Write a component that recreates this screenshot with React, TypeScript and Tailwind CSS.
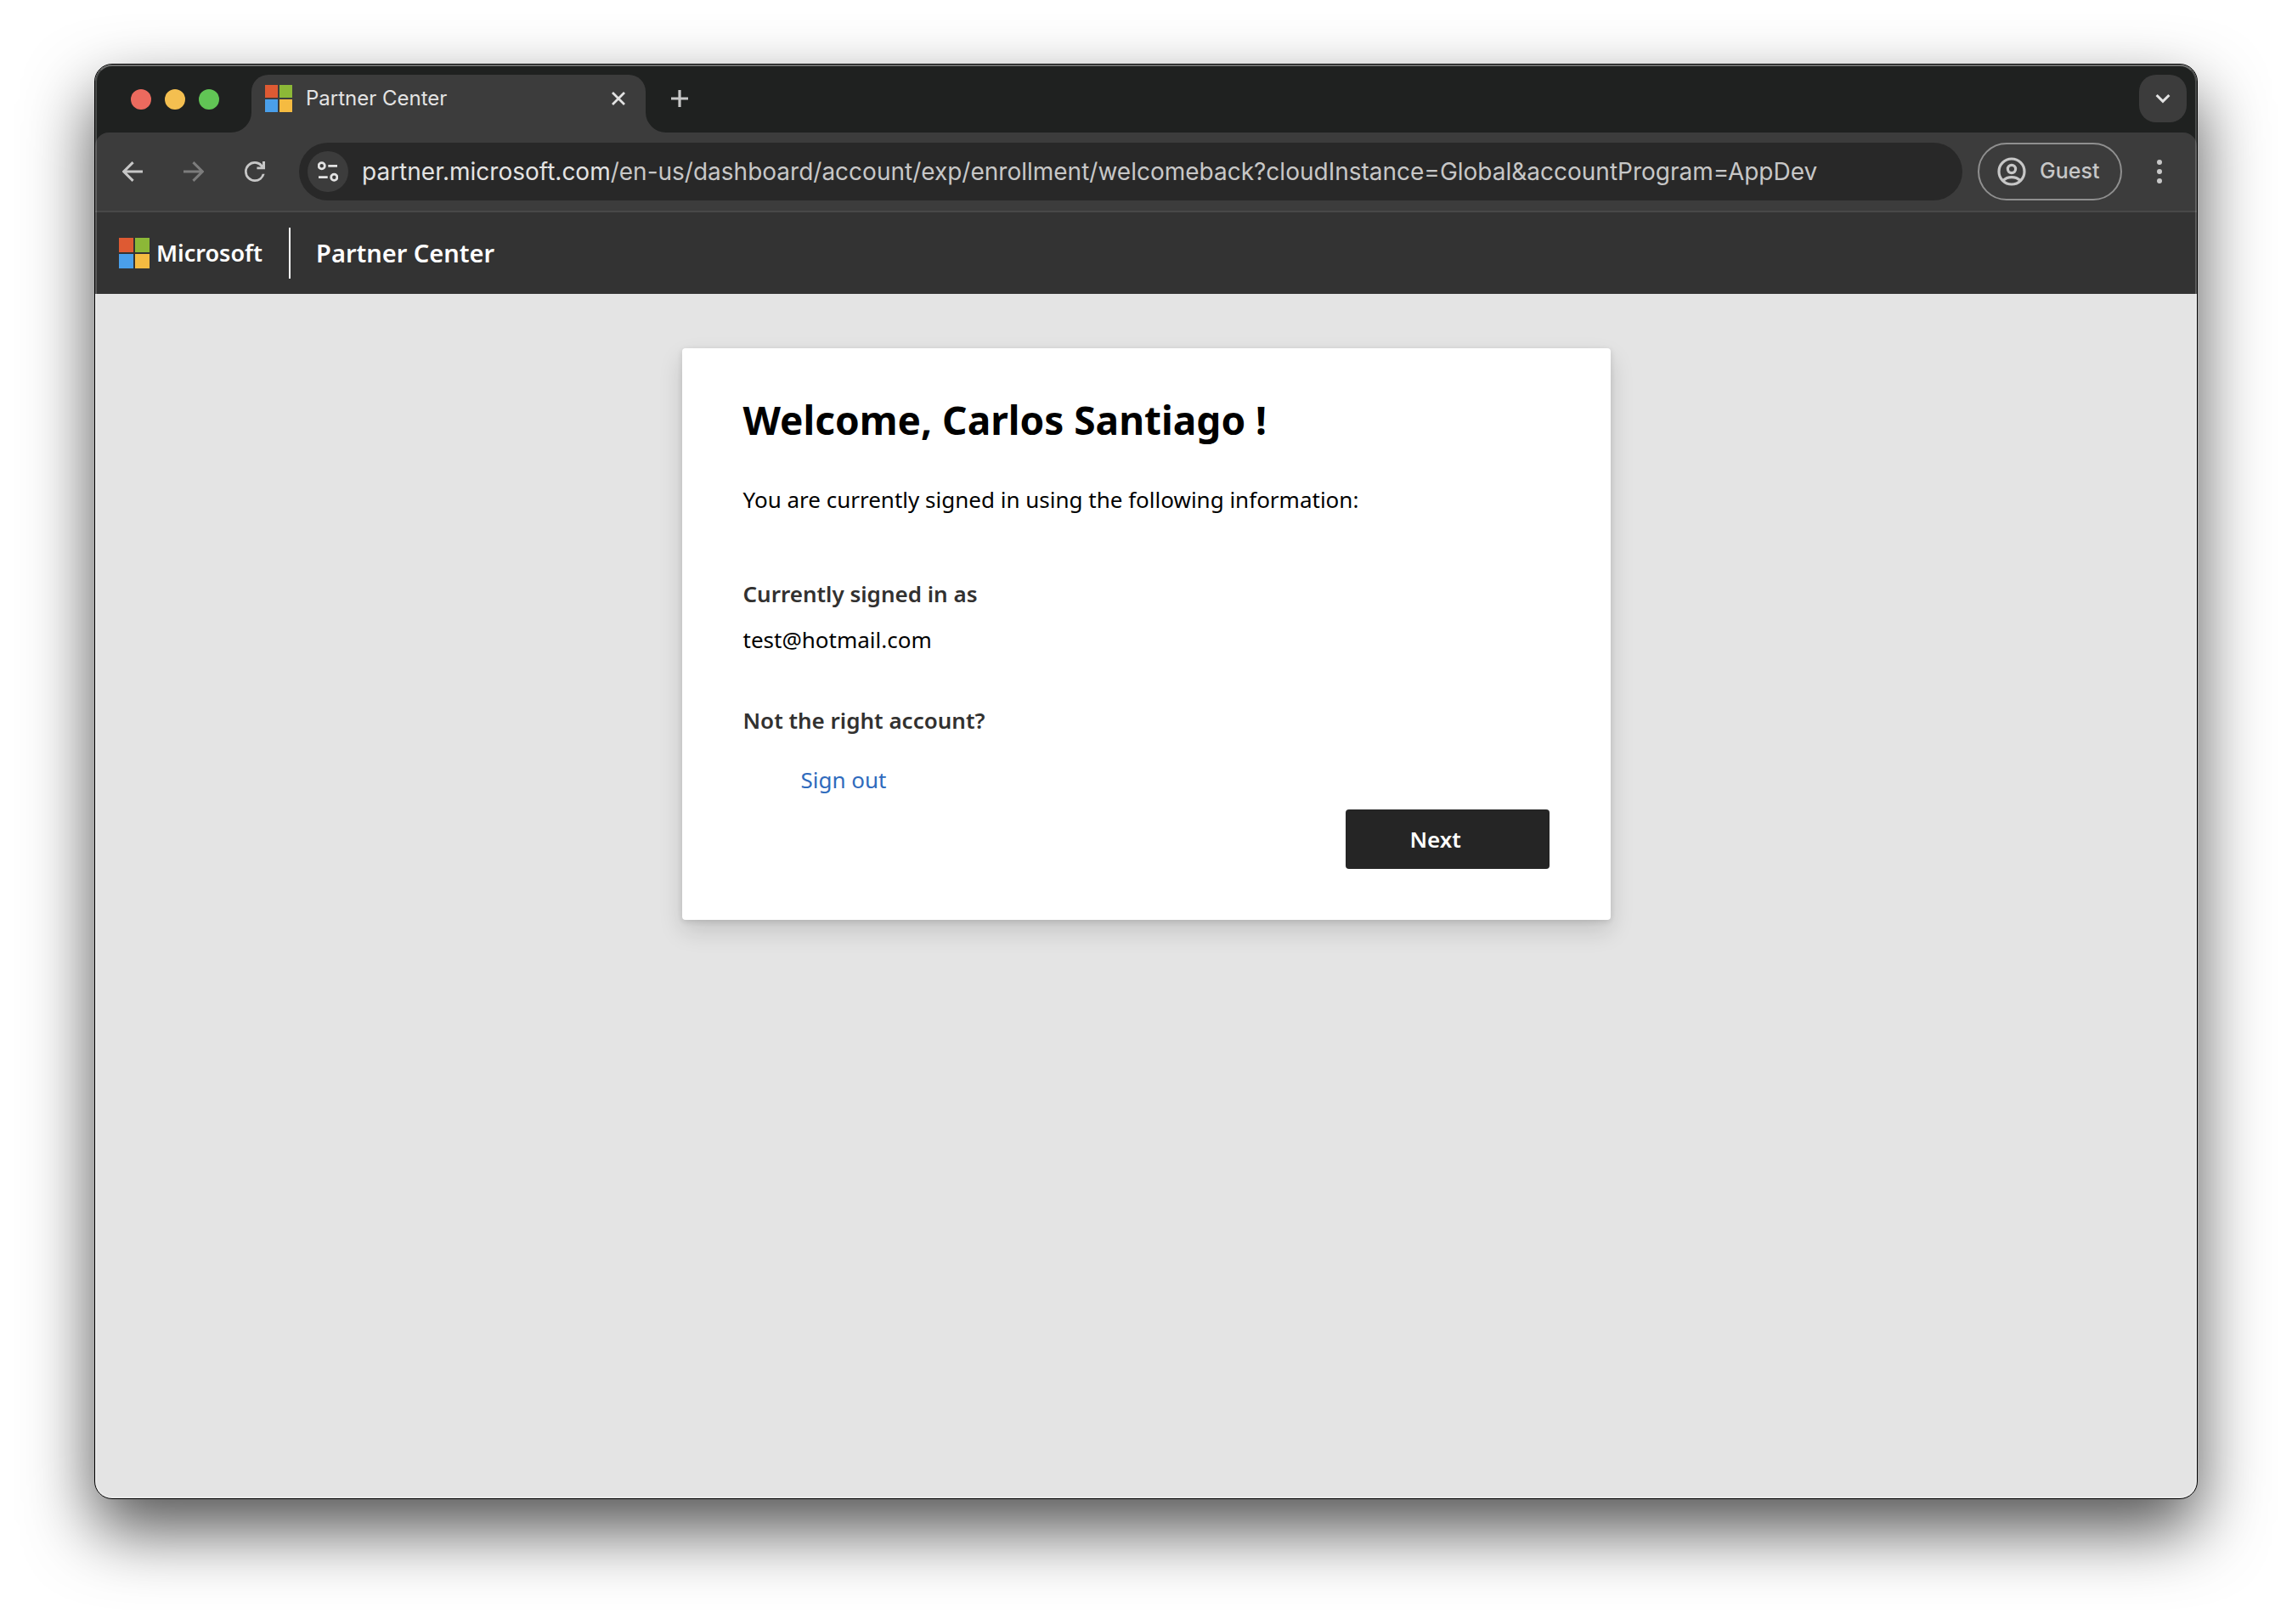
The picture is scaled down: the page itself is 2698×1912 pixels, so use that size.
import React from 'react';

const strokeProps = { fill: 'none', stroke: 'currentColor' } as const;

function MicrosoftLogo({ className }: { className: string }) {
  return (
    <span className={`grid shrink-0 grid-cols-2 gap-0.5 ${className}`} aria-hidden="true">
      <span className="bg-[#de5a33]" />
      <span className="bg-[#8cb837]" />
      <span className="bg-[#4a9fea]" />
      <span className="bg-[#f5bb41]" />
    </span>
  );
}

function ArrowIcon({ flipped = false }: { flipped?: boolean }) {
  return (
    <svg viewBox="0 0 24 24" className="size-6" {...strokeProps} strokeWidth="3" aria-hidden="true">
      {flipped ? (
        <path d="M0 12H22M11.4 1.1L22.3 12L11.4 22.9" />
      ) : (
        <path d="M24 12H2M12.6 1.1L1.7 12L12.6 22.9" />
      )}
    </svg>
  );
}

function ReloadIcon() {
  return (
    <svg viewBox="4 4 16 16" className="size-6" fill="currentColor" aria-hidden="true">
      <path d="M12 20q-3.35 0-5.675-2.325T4 12t2.325-5.675T12 4q1.725 0 3.3.713T18 6.75V4h2v6.2h-6.4V8.4h3.2q-.8-1-2-1.7T12 5.8Q9.5 5.8 7.65 7.65T5.8 12t1.85 4.35T12 18.2q1.925 0 3.575-1.1T17.85 13.9h1.9q-.7 2.75-2.85 4.425T12 20" />
    </svg>
  );
}

function SiteInfoIcon() {
  return (
    <svg viewBox="0 0 24 24" className="size-6" {...strokeProps} strokeWidth="2.8" aria-hidden="true">
      <circle cx="4.7" cy="5.3" r="3.6" />
      <path d="M12.3 5.3H23M1 18.7H11.7" />
      <circle cx="19.3" cy="18.7" r="3.6" />
    </svg>
  );
}

function AccountIcon() {
  return (
    <svg viewBox="-17 -17 34 34" className="size-[34px]" {...strokeProps} strokeWidth="3.2" aria-hidden="true">
      <circle r="15" />
      <circle cy="-3" r="4.6" />
      <path d="M-10 10.4Q-6 6.6 0 6.6T10 10.4" />
    </svg>
  );
}

function TabFlare({ className, d }: { className: string; d: string }) {
  return (
    <svg viewBox="0 0 24 24" className={`absolute bottom-0 size-6 text-[#3c3c3c] ${className}`} fill="currentColor" aria-hidden="true">
      <path d={d} />
    </svg>
  );
}

function TabStrip() {
  return (
    <div className="flex h-20 items-start bg-[#1f2120] pt-3 pr-3">
      <div className="flex h-14 w-[184px] shrink-0 items-center gap-4 pt-0.5 pl-[42px]">
        <button aria-label="Close window" className="size-6 rounded-full bg-[#ec6a5e]" />
        <button aria-label="Minimize window" className="size-6 rounded-full bg-[#f4bf50]" />
        <button aria-label="Zoom window" className="size-6 rounded-full bg-[#61c555]" />
      </div>
      <div className="relative flex h-[68px] w-[464px] items-start rounded-t-[20px] bg-[#3c3c3c] pr-5 pl-4">
        <TabFlare className="right-full" d="M24 0V24H0A24 24 0 0 0 24 0Z" />
        <TabFlare className="left-full" d="M0 0V24H24A24 24 0 0 1 0 0Z" />
        <div className="flex h-14 flex-1 items-center gap-4">
          <MicrosoftLogo className="size-8" />
          <span className="flex-1 text-2xl text-[#e3e3e3]">Partner Center</span>
          <button aria-label="Close tab" className="flex size-6 items-center justify-center text-[#e3e3e3]">
            <svg viewBox="0 0 16 16" className="size-4" {...strokeProps} strokeWidth="2.8" aria-hidden="true">
              <path d="M1 1L15 15M15 1L1 15" />
            </svg>
          </button>
        </div>
      </div>
      <button aria-label="New tab" className="ml-3 flex size-14 items-center justify-center text-[#c7c7c7]">
        <svg viewBox="0 0 20 20" className="size-5" {...strokeProps} strokeWidth="3.2" aria-hidden="true">
          <path d="M10 0V20M0 10H20" />
        </svg>
      </button>
      <button aria-label="Search tabs" className="ml-auto flex size-14 items-center justify-center rounded-[20px] bg-[#3c3c3c] text-[#e3e3e3]">
        <svg viewBox="0 0 18 12" className="h-3 w-[18px]" {...strokeProps} strokeWidth="3" aria-hidden="true">
          <path d="M1.6 2L9 9.4L16.4 2" />
        </svg>
      </button>
    </div>
  );
}

function Toolbar() {
  return (
    <div className="bg-[#1f2120]">
      <div className="flex h-[94px] items-center rounded-t-2xl border-b-2 border-[#484848] bg-[#3c3c3c] pr-6 text-[#c7c7c7]">
        <div className="flex w-60 shrink-0 items-center gap-12 pl-8">
          <button aria-label="Back"><ArrowIcon /></button>
          <button aria-label="Forward" className="text-[#7c7c7c]" disabled><ArrowIcon flipped /></button>
          <button aria-label="Reload"><ReloadIcon /></button>
        </div>
        <div className="flex h-[68px] min-w-0 flex-1 items-center gap-4 rounded-full bg-[#282828] px-2.5">
          <button aria-label="View site information" className="flex size-12 shrink-0 items-center justify-center rounded-full bg-[#3c3c3c] text-[#e3e3e3]">
            <SiteInfoIcon />
          </button>
          <div
            role="textbox"
            aria-label="Address and search bar"
            contentEditable
            suppressContentEditableWarning
            className="min-w-0 flex-1 overflow-hidden text-[28px] leading-9 whitespace-nowrap text-[#c7c7c7]"
          >
            <span className="text-[#e3e3e3]">partner.microsoft.com</span>
            /en-us/dashboard/account/exp/enrollment/welcomeback?cloudInstance=Global&amp;accountProgram=AppDev
          </div>
        </div>
        <button className="ml-[18px] flex h-[68px] w-[170px] shrink-0 items-center gap-4 rounded-full border-2 border-[#8f8f8f] pl-[21px] text-[25px] font-medium">
          <AccountIcon />
          Guest
        </button>
        <button aria-label="Browser menu" className="ml-6 flex h-12 w-10 shrink-0 items-center justify-center">
          <svg viewBox="0 0 6 28" className="h-7 w-1.5" fill="currentColor" aria-hidden="true">
            <circle cx="3" cy="3" r="3" />
            <circle cx="3" cy="14" r="3" />
            <circle cx="3" cy="25" r="3" />
          </svg>
        </button>
      </div>
    </div>
  );
}

function SiteHeader() {
  return (
    <header className="flex h-24 items-center bg-[#333333] pl-7 font-['Noto_Sans','Open_Sans',sans-serif] font-semibold text-white">
      <a href="#" className="flex items-center gap-2">
        <MicrosoftLogo className="size-9" />
        <span className="text-[27px]">Microsoft</span>
      </a>
      <span className="ml-[31px] h-[60px] w-0.5 bg-white" />
      <a href="#" className="ml-[30px] text-[29px]">Partner Center</a>
    </header>
  );
}

function WelcomeCard() {
  return (
    <section className="flex w-full max-w-[1093px] flex-col rounded bg-white px-[72px] pt-[52px] pb-[60px] text-[26px] leading-9 text-black shadow-[0_13px_29px_rgba(0,0,0,0.14),0_2px_7px_rgba(0,0,0,0.12)]">
      <h1 className="text-[46px] leading-16 font-bold">Welcome, Carlos Santiago !</h1>
      <p className="mt-11">You are currently signed in using the following information:</p>
      <h2 className="mt-[75px] font-semibold text-[#323130]">Currently signed in as</h2>
      <p className="mt-[18px]">test@hotmail.com</p>
      <h2 className="mt-[59px] font-semibold text-[#323130]">Not the right account?</h2>
      <a href="#" className="mt-[34px] self-start pl-[68px] text-[#2f6bbd]">Sign out</a>
      <button className="mt-[17px] h-[70px] w-60 self-end rounded bg-[#252525] pl-[76px] text-left font-semibold text-white">
        Next
      </button>
    </section>
  );
}

export default function App() {
  return (
    <div className="flex min-h-screen bg-white px-[111px] pt-[75px] pb-[147px] font-['Inter',sans-serif]">
      <div className="relative flex min-w-0 flex-1 flex-col overflow-hidden rounded-[21px] border border-black bg-[#e4e4e4] shadow-[0_36px_80px_rgba(0,0,0,0.68)]">
        <TabStrip />
        <Toolbar />
        <SiteHeader />
        <main className="flex flex-1 justify-center pt-16 pb-16 font-['Noto_Sans','Open_Sans',sans-serif]">
          <div className="flex w-full items-start justify-center">
            <WelcomeCard />
          </div>
        </main>
        <div className="pointer-events-none absolute inset-0 rounded-[20px] border-2 border-white/20 border-t-white/35" />
      </div>
    </div>
  );
}
